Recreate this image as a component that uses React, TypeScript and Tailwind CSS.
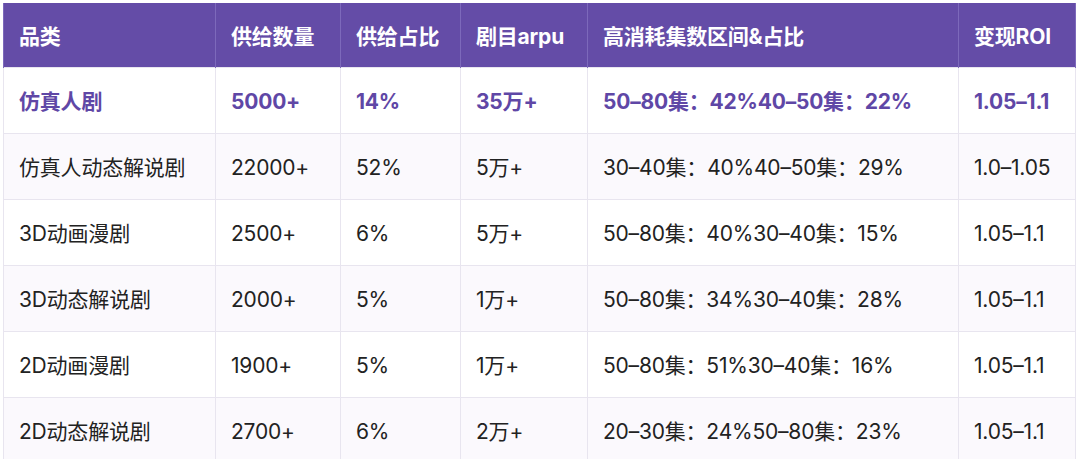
import React from "react";

const headers = ["品类", "供给数量", "供给占比", "剧目arpu", "高消耗集数区间&占比", "变现ROI"];
const rows = [
  ["仿真人剧", "5000+", "14%", "35万+", "50–80集：42%40–50集：22%", "1.05–1.1"],
  ["仿真人动态解说剧", "22000+", "52%", "5万+", "30–40集：40%40–50集：29%", "1.0–1.05"],
  ["3D动画漫剧", "2500+", "6%", "5万+", "50–80集：40%30–40集：15%", "1.05–1.1"],
  ["3D动态解说剧", "2000+", "5%", "1万+", "50–80集：34%30–40集：28%", "1.05–1.1"],
  ["2D动画漫剧", "1900+", "5%", "1万+", "50–80集：51%30–40集：16%", "1.05–1.1"],
  ["2D动态解说剧", "2700+", "6%", "2万+", "20–30集：24%50–80集：23%", "1.05–1.1"],
];

const widths = ["w-[212px]", "w-[125px]", "w-[120px]", "w-[127px]", "w-[371px]", "w-[117px]"];

export default function App() {
  return (
    <div
      className="w-[1080px] h-[459px] overflow-hidden bg-white pt-[3px] pl-[3px]"
      style={{ fontFamily: 'Inter, "Noto Sans CJK SC", sans-serif' }}
    >
      <table className="border-collapse table-fixed w-[1073px] text-[21px] leading-none tracking-[-0.2px]">
        <thead>
          <tr className="bg-[#644ca7] h-[64px]">
            {headers.map((h, i) => (
              <th
                key={i}
                className={`${widths[i]} text-left font-bold text-white px-[15px] pt-[3px] border-x border-[#7d69bb]`}
              >
                {h}
              </th>
            ))}
          </tr>
        </thead>
        <tbody>
          {rows.map((r, ri) => (
            <tr key={ri} className={`h-[66px] ${ri % 2 === 1 ? "bg-[#fbf9fd]" : "bg-white"}`}>
              {r.map((c, ci) => (
                <td
                  key={ci}
                  className={`px-[15px] pt-[2px] border border-[#e8e5ef] whitespace-nowrap ${
                    ri === 0 ? "font-bold text-[#5f47a6]" : "text-[#222222]"
                  }`}
                >
                  {c}
                </td>
              ))}
            </tr>
          ))}
        </tbody>
      </table>
    </div>
  );
}
